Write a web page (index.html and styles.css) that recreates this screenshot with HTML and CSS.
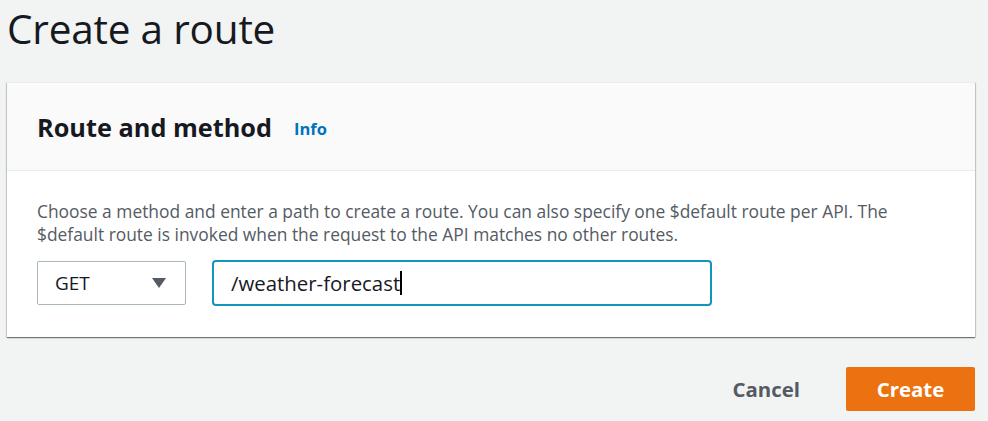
FILE: index.html
```html
<!DOCTYPE html>
<html>
<head>
<meta charset="utf-8">
<link rel="stylesheet" href="styles.css">
</head>
<body>
<div class="page">
  <h1 class="title">Create a route</h1>
  <div class="card">
    <div class="card-header">
      <h2 class="card-title">Route and method</h2>
      <a class="info">Info</a>
    </div>
    <div class="card-body">
      <p class="desc">Choose a method and enter a path to create a route. You can also specify one $default route per API. The $default route is invoked when the request to the API matches no other routes.</p>
      <div class="fields">
        <div class="select">
          <span>GET</span>
          <svg class="caret" width="16" height="12" viewBox="0 0 16 12"><path d="M1 1 H15 L8 11 Z" fill="#545b64"/></svg>
        </div>
        <div class="input"><span>/weather-forecast</span><span class="cursor"></span></div>
      </div>
    </div>
  </div>
  <div class="actions">
    <button class="btn-link">Cancel</button>
    <button class="btn-primary">Create</button>
  </div>
</div>
</body>
</html>
```
FILE: styles.css
```css
html, body {
  margin: 0;
  padding: 0;
  background: #f2f3f3;
}
body {
  font-family: "Open Sans", "Noto Sans", sans-serif;
  color: #16191f;
}
.page {
  padding: 0 13px 0 7px;
}
.title {
  margin: 0;
  padding: 0 0 0 0;
  font-weight: 400;
  font-size: 40.5px;
  line-height: 57px;
  height: 82px;
  letter-spacing: -0.2px;
}
.card {
  background: #fff;
  box-shadow: 0 1px 1px 0 rgba(0,28,36,0.4), 1px 1px 1px 0 rgba(0,28,36,0.15), -1px 1px 1px 0 rgba(0,28,36,0.15);
  border-top: 1px solid #eaeded;
}
.card-header {
  background: #fafafa;
  border-bottom: 1px solid #eaeded;
  height: 87px;
  display: flex;
  align-items: center;
  padding: 0 30px;
  gap: 22px;
}
.card-title {
  margin: 0;
  font-size: 25.3px;
  font-weight: 700;
  line-height: 30px;
}
.info {
  color: #0073bb;
  font-weight: 700;
  font-size: 16.5px;
  margin-top: 4px;
}
.card-body {
  padding: 29px 30px 31px;
}
.desc {
  margin: 0;
  font-size: 17.4px;
  line-height: 23px;
  color: #545b64;
  max-width: 900px;
}
.fields {
  display: flex;
  gap: 26px;
  margin-top: 14px;
  align-items: center;
}
.select {
  width: 149px;
  height: 44px;
  box-sizing: border-box;
  border: 1px solid #aab7b8;
  border-radius: 2px;
  display: flex;
  align-items: center;
  justify-content: space-between;
  padding: 0 18px 0 17px;
  font-size: 19px;
}
.input {
  width: 500px;
  height: 46px;
  box-sizing: border-box;
  border: 2px solid #0f97bd;
  border-radius: 4px;
  display: flex;
  align-items: center;
  padding: 0 0 0 17px;
  font-size: 20.4px;
}
.cursor {
  display: inline-block;
  width: 2px;
  height: 24px;
  background: #000;
  margin-left: 0;
}
.actions {
  display: flex;
  justify-content: flex-end;
  align-items: center;
  gap: 46px;
  margin-top: 30px;
}
.btn-link {
  background: none;
  border: none;
  font-family: inherit;
  font-weight: 700;
  font-size: 20.4px;
  color: #545b64;
  padding: 0;
}
.btn-primary {
  background: #ec7211;
  color: #fff;
  border: none;
  border-radius: 2px;
  font-family: inherit;
  font-weight: 700;
  font-size: 20.4px;
  width: 129px;
  height: 44px;
  padding: 0;
}
```
